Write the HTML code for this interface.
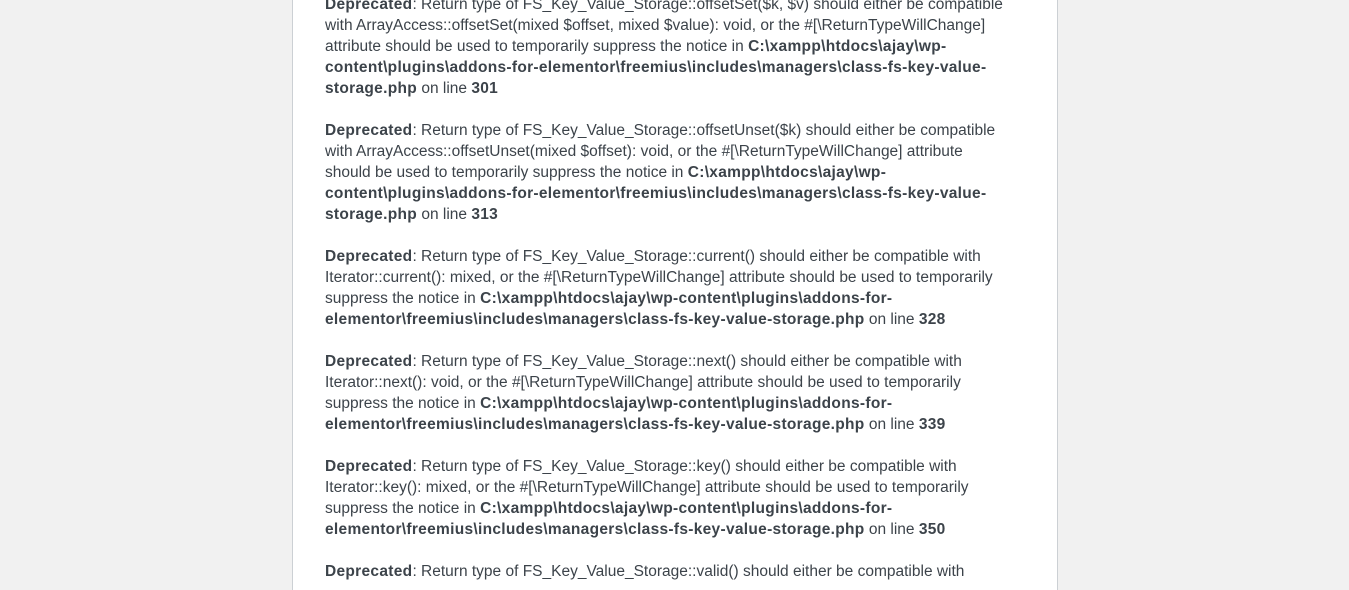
<!DOCTYPE html>
<html><head><meta charset="utf-8"><style>
html,body{margin:0;padding:0;background:#f1f1f1;width:1349px;height:568px;overflow:hidden}
.box{position:absolute;left:292px;top:-10px;width:764px;height:600px;background:#fff;border-left:1px solid #ccd0d4;border-right:1px solid #ccd0d4}
.t{position:absolute;left:325px;font-family:"Liberation Sans",sans-serif;font-size:15.5px;line-height:21px;color:#3c434a;white-space:nowrap}
b{font-weight:bold;letter-spacing:0.3px}
</style></head><body>
<div class="box"></div>
<div class="t" style="top:-6px">
<b>Deprecated</b>: Return type of FS_Key_Value_Storage::offsetSet($k, $v) should either be compatible<br>
with ArrayAccess::offsetSet(mixed $offset, mixed $value): void, or the #[\ReturnTypeWillChange]<br>
attribute should be used to temporarily suppress the notice in <b>C:\xampp\htdocs\ajay\wp-</b><br>
<b>content\plugins\addons-for-elementor\freemius\includes\managers\class-fs-key-value-</b><br>
<b>storage.php</b> on line <b>301</b><br><br>
<b>Deprecated</b>: Return type of FS_Key_Value_Storage::offsetUnset($k) should either be compatible<br>
with ArrayAccess::offsetUnset(mixed $offset): void, or the #[\ReturnTypeWillChange] attribute<br>
should be used to temporarily suppress the notice in <b>C:\xampp\htdocs\ajay\wp-</b><br>
<b>content\plugins\addons-for-elementor\freemius\includes\managers\class-fs-key-value-</b><br>
<b>storage.php</b> on line <b>313</b><br><br>
<b>Deprecated</b>: Return type of FS_Key_Value_Storage::current() should either be compatible with<br>
Iterator::current(): mixed, or the #[\ReturnTypeWillChange] attribute should be used to temporarily<br>
suppress the notice in <b>C:\xampp\htdocs\ajay\wp-content\plugins\addons-for-</b><br>
<b>elementor\freemius\includes\managers\class-fs-key-value-storage.php</b> on line <b>328</b><br><br>
<b>Deprecated</b>: Return type of FS_Key_Value_Storage::next() should either be compatible with<br>
Iterator::next(): void, or the #[\ReturnTypeWillChange] attribute should be used to temporarily<br>
suppress the notice in <b>C:\xampp\htdocs\ajay\wp-content\plugins\addons-for-</b><br>
<b>elementor\freemius\includes\managers\class-fs-key-value-storage.php</b> on line <b>339</b><br><br>
<b>Deprecated</b>: Return type of FS_Key_Value_Storage::key() should either be compatible with<br>
Iterator::key(): mixed, or the #[\ReturnTypeWillChange] attribute should be used to temporarily<br>
suppress the notice in <b>C:\xampp\htdocs\ajay\wp-content\plugins\addons-for-</b><br>
<b>elementor\freemius\includes\managers\class-fs-key-value-storage.php</b> on line <b>350</b><br><br>
<b>Deprecated</b>: Return type of FS_Key_Value_Storage::valid() should either be compatible with
</div>
</body></html>
